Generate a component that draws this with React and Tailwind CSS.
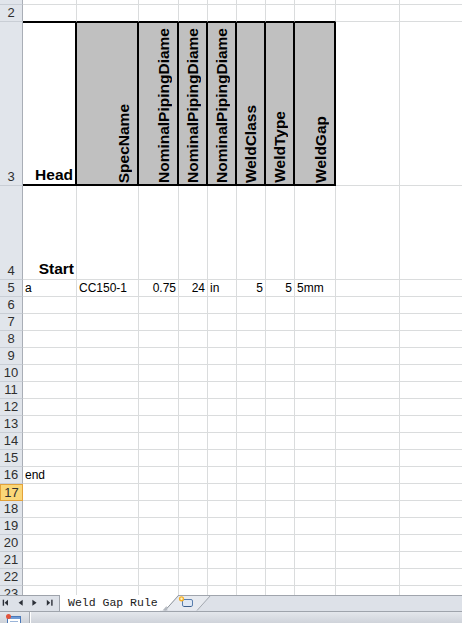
import React from "react";

// column widths, each including its 1px right grid line (A..J)
const W = [
  "w-[54px]",
  "w-[62px]",
  "w-[40px]",
  "w-[29px]",
  "w-[29px]",
  "w-[29px]",
  "w-[29px]",
  "w-[41px]",
  "w-[64px]",
  "w-[64px]",
];

const GRID = "border-r border-b border-r-[#dadcdd] border-b-[#dadcdd]";

function RowHead({ n, active, bottom }) {
  const base =
    "w-[23px] shrink-0 flex justify-center text-[13px] leading-[16px] text-[#2f2f2f]";
  const align = bottom ? "items-end" : "items-center";
  const look = active
    ? "bg-[#fad778] border border-[#e3a23a]"
    : "bg-[#e1e5eb] border-r border-b border-r-[#a9aeb6] border-b-[#c9ced5]";
  return <div className={`${base} ${align} ${look}`}>{n}</div>;
}

function Cell({ w, children, right, extra = "" }) {
  return (
    <div
      className={`${w} shrink-0 flex items-center overflow-hidden whitespace-nowrap ${GRID} ${extra}`}
    >
      {children !== undefined && (
        <span
          className={`w-full px-[2px] text-[12px] leading-[16px] text-black ${
            right ? "text-right" : "text-left"
          }`}
        >
          {children}
        </span>
      )}
    </div>
  );
}

function PlainRow({ n, cells = {}, active }) {
  return (
    <div className="flex h-[17px]">
      <RowHead n={n} active={active} />
      {W.map((w, i) => {
        const c = cells[i];
        return (
          <Cell key={i} w={w} right={c && c.right}>
            {c ? c.t : undefined}
          </Cell>
        );
      })}
    </div>
  );
}

function Vertical({ children }) {
  return (
    <span className="[writing-mode:vertical-rl] rotate-180 whitespace-nowrap text-[15.5px] leading-[18px] font-bold text-black">
      {children}
    </span>
  );
}

const HEADERS = [
  "SpecName",
  "NominalPipingDiame",
  "NominalPipingDiame",
  "NominalPipingDiame",
  "WeldClass",
  "WeldType",
  "WeldGap",
];

function Sheet() {
  const rest = [];
  for (let n = 6; n <= 23; n++) {
    const cells = n === 16 ? { 0: { t: "end" } } : {};
    rest.push(<PlainRow key={n} n={n} cells={cells} active={n === 17} />);
  }

  return (
    <div className="h-[595px] overflow-hidden bg-white">
      <div className="-mt-[12px]">
        <PlainRow n={1} />

        {/* row 2: bottom edge of the boxed header block */}
        <div className="flex h-[17px]">
          <RowHead n={2} />
          {W.map((w, i) => (
            <div
              key={i}
              className={`${w} shrink-0 border-r border-b border-r-[#dadcdd] ${
                i < 8 ? "border-b-black" : "border-b-[#dadcdd]"
              }`}
            />
          ))}
        </div>

        {/* row 3: field names */}
        <div className="flex h-[164px]">
          <RowHead n={3} bottom />
          <div
            className={`${W[0]} shrink-0 flex items-end justify-end pr-[2px] bg-white border-t border-r-2 border-b-2 border-black`}
          >
            <span className="text-[15.5px] leading-[18px] font-bold text-black">
              Head
            </span>
          </div>
          {HEADERS.map((h, i) => (
            <div
              key={i}
              className={`${W[i + 1]} shrink-0 flex items-end justify-end pr-[4px] pb-[1px] overflow-hidden bg-[#c0c0c0] border-t border-r-2 border-b-2 border-black`}
            >
              <Vertical>{h}</Vertical>
            </div>
          ))}
          <div className={`${W[8]} shrink-0 ${GRID}`} />
          <div className={`${W[9]} shrink-0 ${GRID}`} />
        </div>

        {/* row 4: tall start row */}
        <div className="flex h-[94px]">
          <RowHead n={4} bottom />
          <div
            className={`${W[0]} shrink-0 flex items-end justify-end pr-[2px] pb-[1px] ${GRID}`}
          >
            <span className="text-[15.5px] leading-[18px] font-bold text-black">
              Start
            </span>
          </div>
          {W.slice(1).map((w, i) => (
            <div key={i} className={`${w} shrink-0 ${GRID}`} />
          ))}
        </div>

        <PlainRow
          n={5}
          cells={{
            0: { t: "a" },
            1: { t: "CC150-1" },
            2: { t: "0.75", right: true },
            3: { t: "24", right: true },
            4: { t: "in" },
            5: { t: "5", right: true },
            6: { t: "5", right: true },
            7: { t: "5mm" },
          }}
        />
        {rest}
      </div>
    </div>
  );
}

function NavButtons() {
  return (
    <svg width="59" height="15" viewBox="0 0 59 15" className="block">
      <g fill="#2c3038">
        <rect x="2.7" y="3.7" width="1.4" height="6" />
        <polygon points="8,3.7 8,9.7 4.6,6.7" />
        <polygon points="22.7,3.7 22.7,9.7 18.6,6.7" />
        <polygon points="32.4,3.7 32.4,9.7 36.6,6.7" />
        <polygon points="46.8,3.7 46.8,9.7 50.2,6.7" />
        <rect x="51.2" y="3.7" width="1.4" height="6" />
      </g>
    </svg>
  );
}

function NewSheetTab() {
  return (
    <svg width="54" height="16" viewBox="0 0 54 16" className="block shrink-0">
      {/* continuation of the active tab up to its slanted edge */}
      <polygon points="0,0 18,0 5,15.5 0,15.5" fill="#ffffff" />
      {/* insert-sheet tab */}
      <polygon points="18,0.5 50,0.5 37,15.5 5,15.5" fill="#e7eaef" />
      <line x1="18" y1="0.5" x2="54" y2="0.5" stroke="#a0a5ad" />
      <line x1="5" y1="15.5" x2="18.5" y2="0.5" stroke="#8e949c" />
      <line x1="37" y1="15.5" x2="50.5" y2="0.5" stroke="#a3a8b0" />
      <polygon points="2.5,15.5 6.5,11 7.5,15.5" fill="#b4b9c0" />
      {/* small sheet with a star */}
      <rect x="22.5" y="4.5" width="10" height="7" rx="1.5" fill="#dfe8f4" stroke="#5a7fae" />
      <line x1="24" y1="11.5" x2="31" y2="11.5" stroke="#3e5f8c" />
      <circle cx="21.5" cy="3.8" r="2.6" fill="#f6b128" />
      <circle cx="21.5" cy="3.8" r="1.2" fill="#fff3c4" />
    </svg>
  );
}

function TabBar() {
  return (
    <div className="h-[17px] flex bg-[#dde1e8] border-b border-b-[#9fa4ac]">
      <div className="w-[60px] shrink-0 border-t border-r border-t-[#9ea3ab] border-r-[#9ea3ab]">
        <NavButtons />
      </div>
      <div className="w-[100px] shrink-0 bg-white flex items-center pl-[8px]">
        <span className="font-['Liberation_Mono',monospace] text-[11.5px] leading-[14px] text-[#1a1a1a] whitespace-nowrap">
          Weld Gap Rule
        </span>
      </div>
      <NewSheetTab />
      <div className="flex-1 border-t border-t-[#a0a5ad]" />
    </div>
  );
}

function StatusBar() {
  return (
    <div className="h-[11px] flex bg-gradient-to-b from-[#e4e7ec] to-[#cfd3da] overflow-hidden">
      <div className="w-[30px] shrink-0 pl-[5px] pt-[2px] border-r border-r-[#a6abb3]">
        <svg width="16" height="12" viewBox="0 0 16 12" className="block">
          <rect x="2.5" y="2.5" width="13" height="9" fill="#ffffff" stroke="#4a78b8" />
          <rect x="3" y="3" width="12" height="2" fill="#6f9bd6" />
          <line x1="5" y1="7.5" x2="13" y2="7.5" stroke="#9ab4d8" />
          <circle cx="3.5" cy="2.5" r="2.5" fill="#e2553d" />
        </svg>
      </div>
      <div className="w-[1px] bg-white" />
      <div className="flex-1" />
    </div>
  );
}

export default function App() {
  return (
    <div className="w-[462px] h-[623px] overflow-hidden bg-white flex flex-col font-['Liberation_Sans',Arial,sans-serif]">
      <Sheet />
      <TabBar />
      <StatusBar />
    </div>
  );
}
